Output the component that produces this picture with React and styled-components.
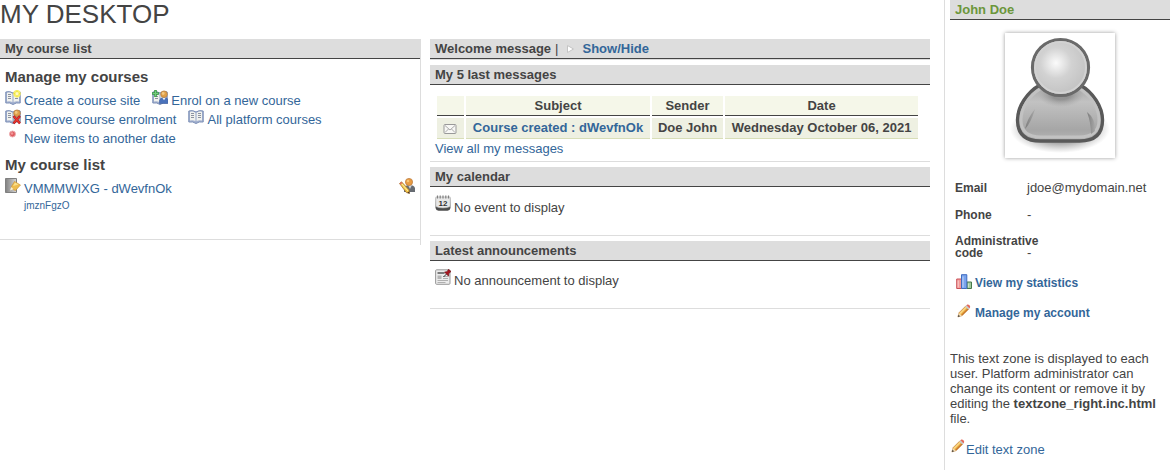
import React from "react";
import styled, { createGlobalStyle, css } from "styled-components";

const GlobalStyle = createGlobalStyle`
  * { box-sizing: border-box; }
  body {
    margin: 0;
    background: #fff;
    color: #444;
    font: 13px/15px "Liberation Sans", Arial, sans-serif;
  }
`;

const Page = styled.div`
  display: flex;
  align-items: stretch;
  min-height: 100vh;
`;

const Main = styled.main`
  flex: 1;
  min-width: 0;
  padding-right: 14px;
`;

const PageTitle = styled.h1`
  margin: 0 0 11px;
  font-size: 26px;
  line-height: 28px;
  font-weight: 400;
`;

const Columns = styled.div`
  display: grid;
  grid-template-columns: 421fr 500fr;
  gap: 9px;
  align-items: start;
`;

const CourseColumn = styled.section`
  border-right: 1px solid #ddd;
  padding-bottom: 5px;
`;

const PortletColumn = styled.div`
  display: flex;
  flex-direction: column;
  gap: 5px;
`;

const Portlet = styled.section`
  border-bottom: 1px solid #ddd;
`;

const BarTitle = styled.h2`
  display: flex;
  align-items: center;
  height: 20px;
  margin: 0;
  padding: 0 5px;
  background: #ddd;
  border-bottom: 1px solid #444;
  font-size: 13px;
  line-height: 19px;
  color: ${(p) => (p.$user ? "#6b963a" : "#444")};
`;

const Separator = styled.span`
  padding: 0 4px;
  font-weight: 400;
`;

const Link = styled.a`
  color: #369;
  text-decoration: none;
  font-weight: ${(p) => (p.$bold ? 700 : 400)};
  ${(p) => p.$icon && css`
    display: inline-flex;
    align-items: flex-start;
    gap: 3px;
    svg { margin-top: -1px; }
  `}
`;

const Toggle = styled.button`
  display: inline-flex;
  align-items: center;
  gap: 4px;
  margin: 0;
  padding: 0;
  border: 0;
  background: none;
  color: #369;
  font: inherit;
`;

const Icon = styled.svg`
  flex: none;
  width: 16px;
  height: 16px;
`;

const CourseBody = styled.div`
  padding: 9px 5px 27px;
`;

const SubTitle = styled.h3`
  margin: 0 0 5px;
  font-size: 15px;
  line-height: 18px;
`;

const Tools = styled.ul`
  list-style: none;
  margin: 0 0 8px;
  padding: 0;
  line-height: 19px;
`;

const ToolRow = styled.li`
  display: flex;
  gap: 12px;
`;

const CourseRow = styled.div`
  display: flex;
  justify-content: space-between;
  line-height: 19px;
`;

const CourseCode = styled.small`
  display: block;
  padding: 2px 0 0 19px;
  color: #369;
  font-size: 10px;
  line-height: 12px;
`;

const Messages = styled.div`
  padding: 9px 5px 5px;
`;

const MessageTable = styled.table`
  width: 99%;
  table-layout: fixed;
  border-spacing: 2px;
  font-weight: 700;
  line-height: 19px;
  text-align: center;
  th, td { padding: 0 5px; white-space: nowrap; }
  th { background: #f5f7e9; border-bottom: 1px solid #444; }
  td {
    height: 21px;
    background: #eef0e2;
    border-bottom: 1px solid #d8deb8;
    vertical-align: top;
  }
  svg { display: block; margin-top: 3px; }
`;

const Col = styled.col`
  width: ${(p) => p.$w};
`;

const Empty = styled.p`
  display: flex;
  gap: 3px;
  margin: 0;
  padding: 8px 5px 18px;
  line-height: 19px;
  span { padding-top: ${(p) => p.$drop}; }
`;

const Aside = styled.aside`
  width: 226px;
  flex: none;
  padding-left: 5px;
  border-left: 1px solid #ddd;
`;

const Avatar = styled.svg`
  display: block;
  width: 110px;
  height: 125px;
  margin: 13px auto 23px;
  background: #fff;
  box-shadow: 0 0 4px #999;
`;

const Details = styled.dl`
  display: grid;
  grid-template-columns: 72px 1fr;
  row-gap: 14px;
  align-items: end;
  margin: 0 5px;
  dt { font-size: 12px; line-height: 12px; font-weight: 700; }
  dd { margin: 0; line-height: 13px; }
`;

const UserLinks = styled.nav`
  display: flex;
  flex-direction: column;
  align-items: flex-start;
  gap: 14px;
  margin: 16px 6px 30px;
  font-size: 12px;
  line-height: 16px;
`;

const TextZone = styled.p`
  margin: 0 0 14px;
`;

const EditLine = styled.div`
  line-height: 20px;
  a { gap: 0; }
`;

function Book() {
  return (
    <g>
      <path d="M.8 2Q4.500.8 8 3 11.500.8 15.200 2V13Q11 12.200 8 14.500 5 12.200.8 13Z" fill="#a3b1cf" stroke="#7a8db5" strokeWidth="1" />
      <path d="M2 2.800Q5 2 7.400 3.800V12Q5 10.700 2 11.400ZM8.600 3.800Q11 2 14 2.800v8.600Q11 10.700 8.600 12Z" fill="#f1f2ee" />
      <path d="M3 4.500h3M3 6.500h3M3 8.500h3M10 4.500h3M10 6.500h3M10 8.500h3" stroke="#8d93a0" strokeWidth="1" />
    </g>
  );
}

function Head() {
  return (
    <g>
      <circle cx="12" cy="4.200" r="3.300" fill="#e0a04a" stroke="#b97f3e" strokeWidth=".7" />
      <circle cx="11.200" cy="3.500" r="1.400" fill="#f3c880" />
    </g>
  );
}

function Pencil() {
  return (
    <g transform="translate(1 0) scale(.86)">
      <path d="m1 15 1.500-5L10.500 2l3.500 3.500-8 8Z" fill="#eeb34b" stroke="#b9783a" strokeWidth=".7" />
      <path d="m3.500 11 8-8" stroke="#fbdc8c" strokeWidth="1.400" />
      <path d="m5.500 13 8-8" stroke="#c8772b" strokeWidth="1.400" />
      <path d="m1 15 1.300-4.400 3.200 3Z" fill="#f3deb6" />
      <path d="m1 15 .8-2.600 1.700 1.800Z" fill="#333" />
      <path d="m9.700 2.800 1.500-1.500 3.500 3.500-1.500 1.500Z" fill="#c5cbd0" />
      <path d="m11 1.500 1-.9q1.300-.4 2.500.9t.7 2.500l-.8.900Z" fill="#e5695a" />
    </g>
  );
}

const drawings = {
  book: <Book />,
  create: (
    <>
      <Book />
      <circle cx="12" cy="3.700" r="3.700" fill="#f8ef6a" />
      <path d="m12 0 1 2.500 2.900 1.200-2.900 1.200-1 2.600-1-2.600-2.900-1.200L11 2.500Z" fill="#f1e230" />
      <circle cx="12" cy="3.700" r="1.700" fill="#fffbc4" />
    </>
  ),
  enrol: (
    <>
      <Book />
      <path d="M7.500 13.500V10.500Q8 7.500 12 7.500T16 10.500v3Z" fill="#4a72bb" stroke="#4463a0" strokeWidth=".6" />
      <path d="m10.300 7.800 1.700 2.500 1.700-2.500Z" fill="#edf0f5" />
      <Head />
      <path d="M3.500 0v7M0 3.500h7" stroke="#3a9a4a" strokeWidth="2.600" />
      <path d="M3.500.7v5.600M.7 3.500h5.600" stroke="#74cb7c" strokeWidth="1.100" />
    </>
  ),
  remove: (
    <>
      <Book />
      <path d="M8 13V10Q8.500 7 12 7t4 3v3Z" fill="#a5a9b8" />
      <Head />
      <path d="m8.500 7 6.500 7.500M15 7l-6.500 7.500" stroke="#b81c1c" strokeWidth="2.600" />
      <path d="m9 7.600 5.500 6.300M14.500 7.600 9 13.900" stroke="#ee3a30" strokeWidth="1.200" />
    </>
  ),
  dot: (
    <>
      <circle cx="7.500" cy="6" r="3" fill="#df5d62" stroke="#edaeb0" />
      <circle cx="7" cy="5.500" r="1.200" fill="#f19a9a" />
    </>
  ),
  course: (
    <>
      <defs>
        <linearGradient id="cover">
          <stop offset="0" stopColor="#808080" />
          <stop offset="1" stopColor="#d8d8d8" />
        </linearGradient>
      </defs>
      <path d="M.5.5h11v14H.5Z" fill="url(#cover)" stroke="#808080" />
      <path d="m6 10.500 1-3 2.500-4 6 3.500-5 5.500-2.500-1Z" fill="#eebd50" stroke="#c78d2e" strokeWidth=".6" />
      <path d="m8 8 2-3.500 3.500 2Z" fill="#fae08c" />
      <path d="m5 12.500 1.200-3.500 2.300 2.300Z" fill="#faf1cf" />
    </>
  ),
  manager: (
    <>
      <path d="M5 14V10Q6 7 10.500 7T16 10v4Z" fill="#666b72" />
      <path d="m9 7 2 4 2-4Z" fill="#cbd0d6" />
      <circle cx="10" cy="4" r="3.600" fill="#e79b42" stroke="#b9773a" strokeWidth=".7" />
      <circle cx="9" cy="3" r="1.300" fill="#f5c477" />
      <path d="m.5 5.500 2-1.700 7.500 8 .5 3.700-3.200-1Z" fill="#f3c547" stroke="#9b6a30" strokeWidth=".7" />
      <path d="m2 5 7 8" stroke="#fff0a1" />
      <path d="m.5 5.500 2-1.700 1 1.200-2 1.700Z" fill="#df725b" />
      <path d="m10.500 15.500-2.300-.8 2-1.200Z" fill="#442d20" />
    </>
  ),
  mail: (
    <>
      <rect x="2" y="3.500" width="12" height="9" rx="1" fill="#f8f8f5" stroke="#999" />
      <path d="m3 4.500 5 4.500 5-4.500M3 11.500 6.500 8M13 11.500 9.500 8" fill="none" stroke="#aaa" />
    </>
  ),
  calendar: (
    <>
      <path d="M.8 3h14.400l.3 10q-.5 2.700-3 2.700h-9q-2.500 0-3-2.700Z" fill="#4c4c4c" />
      <path d="M.8 2h14.400V11.500q-3 1.500-7.200 1.500T.8 11.500Z" fill="#e8e8e8" stroke="#aaa" strokeWidth=".6" />
      <path d="M2.500.5v3M5.200.5v3M8 .5v3M10.800.5v3M13.500.5v3" stroke="#808080" strokeWidth="1.200" />
      <text x="3.500" y="10.500" fontSize="8" fontWeight="700" fill="#333">12</text>
    </>
  ),
  news: (
    <>
      <rect x=".6" y=".8" width="14.400" height="14.500" rx="1" fill="#ececec" stroke="#999" />
      <path d="M2.500 4h7" stroke="#666" strokeWidth="1.700" />
      <path d="M8 7.500h5M8 9.500h5M2.500 11.500h10.500M2.500 13.500h8" stroke="#b0b0b0" />
      <path d="M2.500 6.500h4v3.500h-4Z" fill="#b5b5b5" />
      <path d="m8.500 8 3-3" stroke="#333" />
      <path d="m9.500 3 2.500-.3L13.500.3 16 2.500l-2.200 2-.2 2.800Z" fill="#a8141e" stroke="#660c12" strokeWidth=".6" />
    </>
  ),
  stats: (
    <>
      <path d="M.7 5h4.800v9.500H.7Z" fill="#f39a98" stroke="#c9535a" />
      <path d="M11 8h4.500v6.500H11Z" fill="#9fc99c" stroke="#48784c" />
      <path d="M5.500.7h5.300v13.800H5.500Z" fill="#7aa4ed" stroke="#3f6cc0" />
      <path d="M7 2.500v11M2.200 6.500v7M12.500 9.500v4" stroke="#fff" strokeOpacity=".45" strokeWidth="1.200" />
    </>
  ),
  pencil: <Pencil />,
};

function Glyph({ name }) {
  return <Icon viewBox="0 0 16 16" aria-hidden="true">{drawings[name]}</Icon>;
}

function IconLink({ icon, bold, children }) {
  return (
    <Link href="#" $icon $bold={bold}>
      <Glyph name={icon} />
      <span>{children}</span>
    </Link>
  );
}

function UserPicture() {
  return (
    <Avatar viewBox="0 0 110 125" role="img" aria-label="John Doe">
      <defs>
        <radialGradient id="head" cx=".42" cy=".42" r=".55">
          <stop offset="0" stopColor="#fbfbfb" />
          <stop offset=".5" stopColor="#d2d2d2" />
          <stop offset="1" stopColor="#c4c4c4" />
        </radialGradient>
        <linearGradient id="body" x1="0" y1="0" x2="0" y2="1">
          <stop offset="0" stopColor="#a5a5a5" />
          <stop offset=".3" stopColor="#c2c2c2" />
          <stop offset=".8" stopColor="#a6a6a6" />
          <stop offset="1" stopColor="#b5b5b5" />
        </linearGradient>
        <radialGradient id="ground">
          <stop offset=".5" stopColor="#777" stopOpacity=".8" />
          <stop offset="1" stopColor="#999" stopOpacity="0" />
        </radialGradient>
        <radialGradient id="neck">
          <stop offset=".4" stopColor="#777" stopOpacity=".6" />
          <stop offset="1" stopColor="#999" stopOpacity="0" />
        </radialGradient>
        <linearGradient id="fold" x1="0" y1="0" x2="1" y2="0">
          <stop offset="0" stopColor="#7c7c7c" />
          <stop offset="1" stopColor="#a8a8a8" />
        </linearGradient>
      </defs>
      <ellipse cx="55" cy="96" rx="50" ry="24" fill="url(#ground)" />
      <path d="M35 52C22 59 12.500 74 12.500 87q0 21 23 21h39q23 0 23-21C97.500 74 88 59 75 52Z" fill="url(#body)" stroke="#595959" strokeWidth="3.400" />
      <path d="M35 56C24 63 16 75 16 87q0 17 20 17h38q20 0 20-17C94 75 86 63 75 56" fill="none" stroke="#c2c2c2" strokeWidth="3" />
      <path d="M30 76Q22 86 20 96Q26 90 30 76Z" fill="url(#fold)" />
      <path d="M82 79Q91 86 90 98L86 101Q86 90 82 79Z" fill="url(#fold)" />
      <ellipse cx="56" cy="62" rx="23" ry="12" fill="url(#neck)" />
      <circle cx="55.500" cy="34.500" r="28" fill="url(#head)" stroke="#6a6a6a" strokeWidth="3.200" />
      <circle cx="55.500" cy="34.500" r="25.500" fill="none" stroke="#d2d2d2" strokeWidth="2" />
    </Avatar>
  );
}

export default function App() {
  return (
    <>
      <GlobalStyle />
      <Page>
        <Main>
          <PageTitle>MY DESKTOP</PageTitle>
          <Columns>
            <CourseColumn>
              <Portlet>
                <BarTitle>My course list</BarTitle>
                <CourseBody>
                  <SubTitle>Manage my courses</SubTitle>
                  <Tools>
                    <ToolRow>
                      <IconLink icon="create">Create a course site</IconLink>
                      <IconLink icon="enrol">Enrol on a new course</IconLink>
                    </ToolRow>
                    <ToolRow>
                      <IconLink icon="remove">Remove course enrolment</IconLink>
                      <IconLink icon="book">All platform courses</IconLink>
                    </ToolRow>
                    <ToolRow>
                      <IconLink icon="dot">New items to another date</IconLink>
                    </ToolRow>
                  </Tools>
                  <SubTitle>My course list</SubTitle>
                  <CourseRow>
                    <IconLink icon="course">VMMMWIXG - dWevfnOk</IconLink>
                    <Link href="#" $icon aria-label="Course manager"><Glyph name="manager" /></Link>
                  </CourseRow>
                  <CourseCode>jmznFgzO</CourseCode>
                </CourseBody>
              </Portlet>
            </CourseColumn>
            <PortletColumn>
              <Portlet>
                <BarTitle>
                  Welcome message<Separator>|</Separator>
                  <Toggle type="button">
                    <Icon viewBox="0 0 16 16" aria-hidden="true">
                      <path d="m4.500 4.500 6 3.500-6 3.500Z" fill="#fff" stroke="#c4c4c4" />
                    </Icon>
                    Show/Hide
                  </Toggle>
                </BarTitle>
              </Portlet>
              <Portlet>
                <BarTitle>My 5 last messages</BarTitle>
                <Messages>
                  <MessageTable>
                    <colgroup>
                      <Col $w="27px" />
                      <Col $w="184px" />
                      <Col $w="71px" />
                      <Col $w="auto" />
                    </colgroup>
                    <thead>
                      <tr>
                        <th aria-label="Status" />
                        <th>Subject</th>
                        <th>Sender</th>
                        <th>Date</th>
                      </tr>
                    </thead>
                    <tbody>
                      <tr>
                        <td><Glyph name="mail" /></td>
                        <td><Link href="#" $bold>Course created : dWevfnOk</Link></td>
                        <td>Doe John</td>
                        <td>Wednesday October 06, 2021</td>
                      </tr>
                    </tbody>
                  </MessageTable>
                  <Link href="#">View all my messages</Link>
                </Messages>
              </Portlet>
              <Portlet>
                <BarTitle>My calendar</BarTitle>
                <Empty $drop="3px"><Glyph name="calendar" /><span>No event to display</span></Empty>
              </Portlet>
              <Portlet>
                <BarTitle>Latest announcements</BarTitle>
                <Empty $drop="2px"><Glyph name="news" /><span>No announcement to display</span></Empty>
              </Portlet>
            </PortletColumn>
          </Columns>
        </Main>
        <Aside>
          <BarTitle $user>John Doe</BarTitle>
          <UserPicture />
          <Details>
            <dt>Email</dt><dd>jdoe@mydomain.net</dd>
            <dt>Phone</dt><dd>-</dd>
            <dt>Administrative code</dt><dd>-</dd>
          </Details>
          <UserLinks>
            <IconLink icon="stats" bold>View my statistics</IconLink>
            <IconLink icon="pencil" bold>Manage my account</IconLink>
          </UserLinks>
          <TextZone>
            This text zone is displayed to each user. Platform administrator can change its content or remove it by editing the <strong>textzone_right.inc.html</strong> file.
          </TextZone>
          <EditLine><IconLink icon="pencil">Edit text zone</IconLink></EditLine>
        </Aside>
      </Page>
    </>
  );
}
